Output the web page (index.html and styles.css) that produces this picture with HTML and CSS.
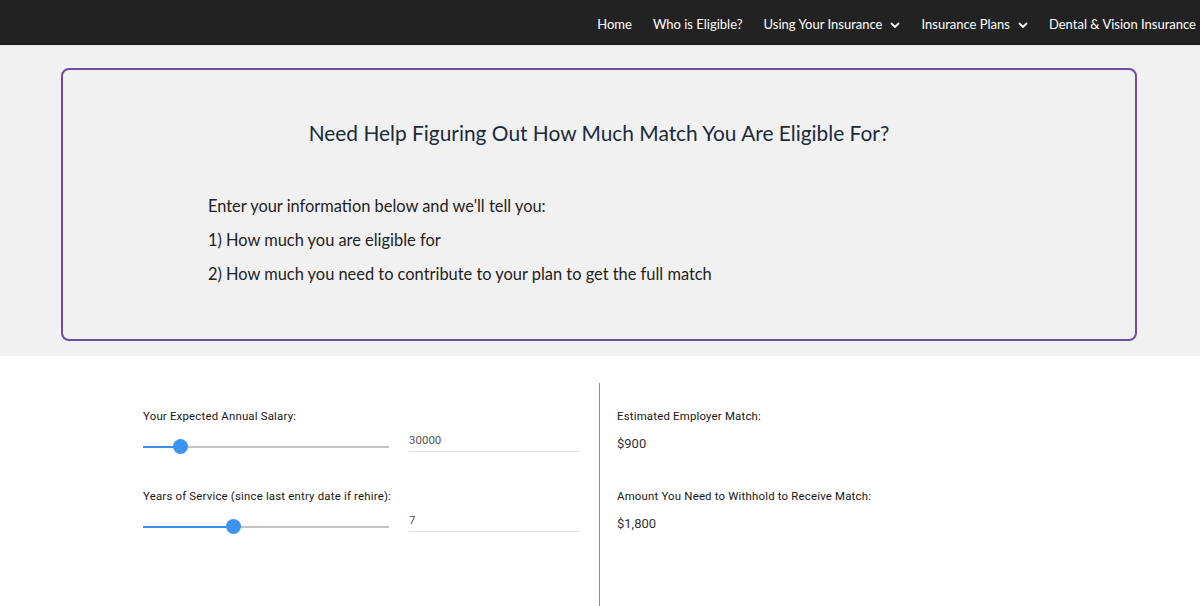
FILE: index.html
```html
<!DOCTYPE html>
<html lang="en">
<head>
<meta charset="utf-8">
<title>Match Calculator</title>
<link rel="stylesheet" href="styles.css">
</head>
<body>
<header class="topbar">
  <nav class="nav">
    <a class="nav-item" href="#">Home</a>
    <a class="nav-item" href="#">Who is Eligible?</a>
    <a class="nav-item" href="#">Using Your Insurance <svg class="chev" viewBox="0 0 10 6" width="10" height="6"><path d="M1 1l4 4 4-4" fill="none" stroke="#fff" stroke-width="1.8"/></svg></a>
    <a class="nav-item" href="#">Insurance Plans <svg class="chev" viewBox="0 0 10 6" width="10" height="6"><path d="M1 1l4 4 4-4" fill="none" stroke="#fff" stroke-width="1.8"/></svg></a>
    <a class="nav-item" href="#">Dental &amp; Vision Insurance</a>
  </nav>
</header>
<section class="intro">
  <div class="intro-box">
    <h1 class="intro-title">Need Help Figuring Out How Much Match You Are Eligible For?</h1>
    <div class="intro-text">
      <p>Enter your information below and we'll tell you:</p>
      <p>1) How much you are eligible for</p>
      <p>2) How much you need to contribute to your plan to get the full match</p>
    </div>
  </div>
</section>
<section class="calc">
  <div class="calc-col calc-inputs">
    <div class="field">
      <div class="field-label">Your Expected Annual Salary:</div>
      <div class="field-row">
        <div class="slider">
          <div class="track"></div>
          <div class="fill" style="width:15%"></div>
          <div class="thumb" style="left:15%"></div>
        </div>
        <div class="text-input">30000</div>
      </div>
    </div>
    <div class="field">
      <div class="field-label">Years of Service (since last entry date if rehire):</div>
      <div class="field-row">
        <div class="slider">
          <div class="track"></div>
          <div class="fill" style="width:36.6%"></div>
          <div class="thumb" style="left:36.6%"></div>
        </div>
        <div class="text-input">7</div>
      </div>
    </div>
  </div>
  <div class="calc-col calc-results">
    <div class="result">
      <div class="field-label">Estimated Employer Match:</div>
      <div class="result-value">$900</div>
    </div>
    <div class="result">
      <div class="field-label">Amount You Need to Withhold to Receive Match:</div>
      <div class="result-value">$1,800</div>
    </div>
  </div>
</section>
</body>
</html>
```
FILE: styles.css
```css
* { box-sizing: border-box; }
html, body { margin: 0; padding: 0; }
body {
  background: #fff;
  font-family: Lato, "Liberation Sans", sans-serif;
  overflow: hidden;
  width: 1200px;
}
.topbar {
  height: 46px;
  background: #222222;
  border-bottom: 1px solid #e6e6e6;
}
.nav {
  display: flex;
  justify-content: flex-end;
  align-items: center;
  height: 45px;
  padding: 3px 4px 0 0;
  gap: 21px;
  white-space: nowrap;
}
.nav-item {
  color: #fff;
  text-decoration: none;
  font-size: 13px;
  display: flex;
  align-items: center;
  gap: 8px;
  line-height: 16px;
}
.chev { display: block; margin-top: 1px; }
.intro {
  background: #f1f1f1;
  padding: 22px 63px 15px 61px;
}
.intro-box {
  border: 2px solid #6d4ea2;
  border-radius: 8px;
  height: 273px;
  padding: 50px 0 0 0;
}
.intro-title {
  margin: 0;
  text-align: center;
  font-weight: 400;
  font-size: 20.9px;
  line-height: 26px;
  color: #1c2a3a;
}
.intro-text {
  margin-top: 43px;
  padding-left: 145px;
}
.intro-text p {
  margin: 0;
  font-size: 16.4px;
  line-height: 34px;
  color: #222;
}
.calc {
  display: flex;
  width: 914px;
  margin: 27px auto 0;
  font-family: Roboto, "Liberation Sans", sans-serif;
}
.calc-col {
  width: 457px;
  min-height: 240px;
  padding-top: 26px;
}
.calc-inputs {
  border-right: 1px solid #8a8a8a;
  padding-right: 19px;
}
.calc-results {
  padding-left: 17px;
}
.field { margin-bottom: 27px; }
.field-label {
  font-size: 11.4px;
  font-weight: 400;
  letter-spacing: 0.2px;
  line-height: 14px;
  color: #151515;
}
.field-row {
  display: flex;
  gap: 20px;
  margin-top: 9px;
}
.slider {
  position: relative;
  width: 246px;
  height: 30px;
  flex: none;
}
.track {
  position: absolute;
  left: 0;
  right: 0;
  top: 14px;
  height: 2px;
  background: #c4c4c4;
}
.fill {
  position: absolute;
  left: 0;
  top: 14px;
  height: 2px;
  background: #3a8ff0;
}
.thumb {
  position: absolute;
  top: 7px;
  width: 15px;
  height: 15px;
  margin-left: -7px;
  border-radius: 50%;
  background: #3d93f0;
}
.text-input {
  flex: 1;
  margin-top: -2px;
  height: 22px;
  line-height: 20px;
  font-size: 11.5px;
  color: #555;
  border-bottom: 1px solid #e2e2e2;
}
.result { margin-bottom: 36px; }
.result-value {
  margin-top: 12px;
  font-size: 13px;
  line-height: 18px;
  color: #333;
}
```
